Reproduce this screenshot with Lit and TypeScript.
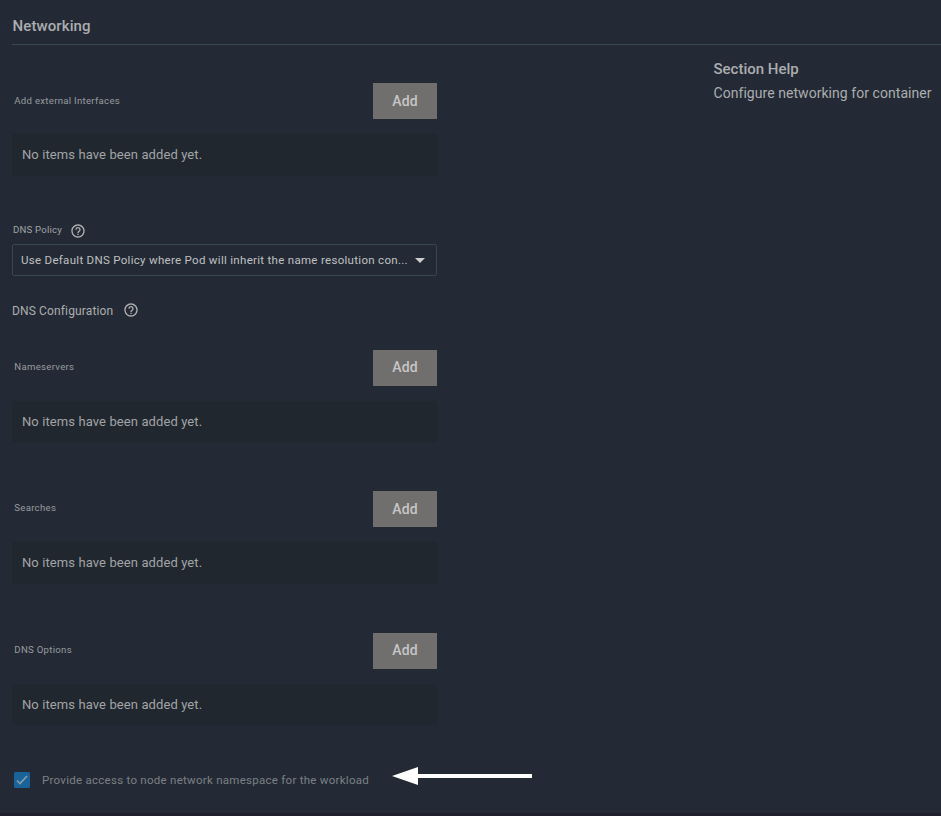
import { LitElement, html, css } from "lit";
import { customElement, property } from "lit/decorators.js";

@customElement("help-icon")
class HelpIcon extends LitElement {
  static styles = css`
    :host { display: block; width: 16px; height: 16px; }
    svg { display: block; fill: #b1b1b2; }
  `;
  render() {
    return html`<svg width="16" height="16" viewBox="0 0 24 24">
      <path d="M11 18h2v-2h-2v2zm1-16C6.48 2 2 6.48 2 12s4.480 10 10 10 10-4.480 10-10S17.520 2 12 2zm0 18c-4.410 0-8-3.590-8-8s3.590-8 8-8 8 3.590 8 8-3.590 8-8 8zm0-14c-2.210 0-4 1.790-4 4h2c0-1.100.9-2 2-2s2 .9 2 2c0 2-3 1.750-3 5h2c0-2.250 3-2.500 3-5 0-2.210-1.790-4-4-4z"/>
    </svg>`;
  }
}

@customElement("item-list")
class ItemList extends LitElement {
  @property() label = "";
  static styles = css`
    :host { display: block; height: 92.5px; }
    .head { display: flex; height: 36px; align-items: center; justify-content: space-between; }
    .label { padding-left: 2.300px; font-size: 9.6px; line-height: 14px; margin-top: -1.3px; color: #989b9f; white-space: nowrap; letter-spacing: 0.29px; }
    button { width: 64px; height: 36px; padding: 0 0 0.6px; border: 0; background: #706f6e; color: #c6c6c6; font: 500 14px/16px Roboto, sans-serif; letter-spacing: 0.1px; }
    .empty { box-sizing: border-box; height: 41.5px; margin-top: 15px; padding-left: 10px; background: #20272f; border-radius: 2px; color: #a2a4a6; font-size: 13px; line-height: 41px; letter-spacing: 0.1px; }
  `;
  render() {
    return html`<div class="head"><span class="label">${this.label}</span><button>Add</button></div>
      <div class="empty"><span>No items have been added yet.</span></div>`;
  }
}

@customElement("app-root")
class AppRoot extends LitElement {
  static styles = css`
    :host { display: block; box-sizing: border-box; height: 816px; overflow: hidden; background: #232a35; border-bottom: 3px solid #201f2d; font-family: Roboto, "Noto Sans", sans-serif; color: #acadaf; }
    h1 { box-sizing: border-box; margin: 0 0 0 12px; height: 45px; padding: 16px 0 0 0.500px; border-bottom: 1px solid #374853; font-size: 15px; line-height: 20px; font-weight: 500; letter-spacing: 0.1px; }
    .body { display: flex; justify-content: space-between; padding-left: 12px; }
    .form { width: 425px; padding-top: 38.2px; }
    .policy { display: flex; height: 16px; margin-top: 47px; padding-left: 1px; gap: 7.500px; align-items: center; font-size: 9.6px; color: #a2a4a6; }
    .policy span { letter-spacing: 0.22px; line-height: 14px; margin-top: -2px; }
    .select { box-sizing: border-box; display: flex; align-items: center; justify-content: space-between; height: 32px; margin-top: 5.4px; padding: 0 11px 0 8px; border: 1px solid #374853; border-radius: 2px; color: #c0c0c1; font-size: 11.5px; white-space: nowrap; letter-spacing: 0.3px; }
    .select svg { display: block; fill: #cecece; }
    .config { display: flex; align-items: center; height: 16px; gap: 10px; margin: 26px 0 31.5px; font-size: 12px; letter-spacing: 0.14px; }
    .config span { padding-top: 1px; }
    item-list + item-list { margin-top: 49px; }
    .check { display: flex; align-items: center; height: 18px; margin-top: 46px; padding-left: 1px; }
    .box { display: block; flex: none; }
    .check span { margin-left: 11px; font-size: 11.5px; color: #7c8084; white-space: nowrap; letter-spacing: 0.27px; }
    .arrow { flex: none; margin: -8px 0 0 23px; }
    .help { width: 227.5px; padding-top: 14px; font-size: 14px; line-height: 20px; white-space: nowrap; letter-spacing: 0.05px; }
    h2 { margin: 0 0 4px; font-size: 15px; line-height: 20px; font-weight: 500; letter-spacing: 0; }
    .help p { margin: 0; }
  `;
  render() {
    return html`
      <h1><span>Networking</span></h1>
      <div class="body">
        <div class="form">
          <item-list label="Add external Interfaces"></item-list>
          <div class="policy"><span>DNS Policy</span><help-icon></help-icon></div>
          <div class="select">
            <span>Use Default DNS Policy where Pod will inherit the name resolution con...</span>
            <svg width="10" height="5" viewBox="0 0 10 5"><path d="M0 0h10L5 5z" /></svg>
          </div>
          <div class="config"><span>DNS Configuration</span><help-icon></help-icon></div>
          <item-list label="Nameservers"></item-list>
          <item-list label="Searches"></item-list>
          <item-list label="DNS Options"></item-list>
          <div class="check">
            <svg class="box" width="18" height="18" viewBox="0 0 18 18">
              <rect x="1" y="1" width="16" height="16" rx="1.500" fill="#19639b" />
              <path d="M4 9.500 7 12.500 14 5" fill="none" stroke="#8b9ba8" stroke-width="1.700" />
            </svg>
            <span>Provide access to node network namespace for the workload</span>
            <svg class="arrow" width="140" height="18" viewBox="0 0 140 18"><path fill="#fff" d="M0 9 26 0v7h114v4H26v7z" /></svg>
          </div>
        </div>
        <div class="help"><h2>Section Help</h2><p>Configure networking for container</p></div>
      </div>`;
  }
}
